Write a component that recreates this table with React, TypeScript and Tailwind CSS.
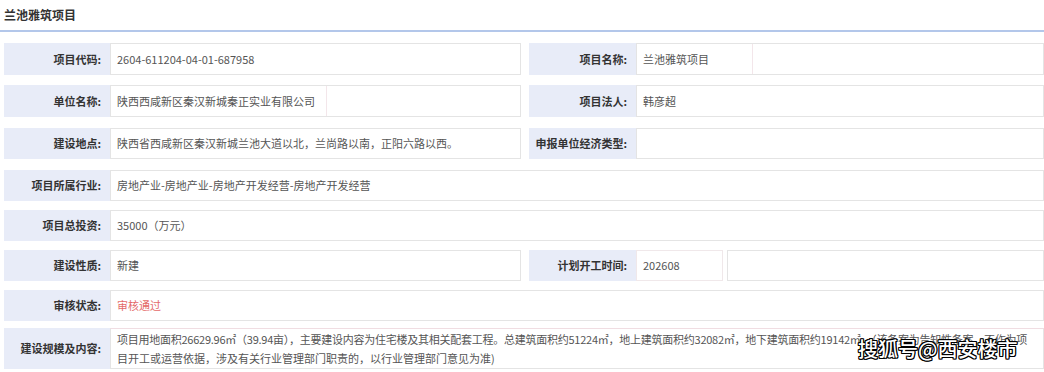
import React from "react";

const FONT = "font-['Noto_Sans_CJK_SC','Noto_Sans',sans-serif]";

function Label({ children, w = "w-[106px]" }: { children: React.ReactNode; w?: string }) {
  return (
    <div
      className={`${w} shrink-0 bg-[#e8ecf8] flex items-center justify-end pr-[9px] text-[11px] font-bold text-[#333] whitespace-nowrap`}
    >
      {children}
    </div>
  );
}

function Value({ children, className = "" }: { children?: React.ReactNode; className?: string }) {
  return (
    <div
      className={`flex-1 min-w-0 bg-white border border-[#e4e4e4] flex items-center pl-[6px] text-[11px] text-[#555] whitespace-nowrap ${className}`}
    >
      {children}
    </div>
  );
}

export default function App() {
  return (
    <div className={`w-[1044px] h-[372px] bg-white relative overflow-hidden ${FONT}`}>
      <div className="h-[30px] flex items-center pl-[4px] text-[12px] font-bold text-[#333]">
        兰池雅筑项目
      </div>
      <div className="h-[2px] bg-[#b3c7ea]" />

      <div className="pl-[4px] flex flex-col">
        {/* row 1 */}
        <div className="mt-[11px] h-[32px] flex">
          <div className="w-[517px] flex">
            <Label>项目代码:</Label>
            <Value>2604-611204-04-01-687958</Value>
          </div>
          <div className="w-[8px]" />
          <div className="flex-1 flex">
            <Label w="w-[107px]">项目名称:</Label>
            <Value>
              <span className="w-[110px] border-r border-[#f3e6ea] h-full flex items-center">兰池雅筑项目</span>
            </Value>
          </div>
        </div>

        {/* row 2 */}
        <div className="mt-[10px] h-[32px] flex">
          <div className="w-[517px] flex">
            <Label>单位名称:</Label>
            <Value>
              <span className="w-[210px] border-r border-[#f3e6ea] h-full flex items-center">陕西西咸新区秦汉新城秦正实业有限公司</span>
            </Value>
          </div>
          <div className="w-[8px]" />
          <div className="flex-1 flex">
            <Label w="w-[107px]">项目法人:</Label>
            <Value>韩彦超</Value>
          </div>
        </div>

        {/* row 3 */}
        <div className="mt-[11px] h-[31px] flex">
          <div className="w-[517px] flex">
            <Label>建设地点:</Label>
            <Value>陕西省西咸新区秦汉新城兰池大道以北，兰尚路以南，正阳六路以西。</Value>
          </div>
          <div className="w-[8px]" />
          <div className="flex-1 flex">
            <Label w="w-[107px]">申报单位经济类型:</Label>
            <Value />
          </div>
        </div>

        {/* row 4 */}
        <div className="mt-[11px] h-[31px] flex">
          <Label>项目所属行业:</Label>
          <Value>房地产业-房地产业-房地产开发经营-房地产开发经营</Value>
        </div>

        {/* row 5 */}
        <div className="mt-[9px] h-[31px] flex">
          <Label>项目总投资:</Label>
          <Value>35000（万元）</Value>
        </div>

        {/* row 6 */}
        <div className="mt-[9px] h-[31px] flex">
          <div className="w-[517px] flex">
            <Label>建设性质:</Label>
            <Value>新建</Value>
          </div>
          <div className="w-[8px]" />
          <div className="flex-1 flex">
            <Label w="w-[107px]">计划开工时间:</Label>
            <div className="w-[87px] bg-white border border-[#f0e8ea] flex items-center pl-[6px] text-[11px] text-[#555]">
              202608
            </div>
            <div className="w-[4px]" />
            <Value />
          </div>
        </div>

        {/* row 7 */}
        <div className="mt-[9px] h-[31px] flex">
          <Label>审核状态:</Label>
          <Value className="text-[#e46a6a]">审核通过</Value>
        </div>

        {/* row 8 */}
        <div className="mt-[7px] h-[41px] flex">
          <Label>建设规模及内容:</Label>
          <div className="flex-1 min-w-0 bg-white border border-[#e4e4e4] border-t-[#f0dde2] flex flex-col justify-center pl-[6px] text-[11px] text-[#555] leading-[19px] overflow-hidden">
            <div className="whitespace-nowrap tracking-[-0.25px]">
              项目用地面积26629.96㎡（39.94亩），主要建设内容为住宅楼及其相关配套工程。总建筑面积约51224㎡，地上建筑面积约32082㎡，地下建筑面积约19142㎡。（该备案为告知性备案，不作为项
            </div>
            <div className="whitespace-nowrap">目开工或运营依据，涉及有关行业管理部门职责的，以行业管理部门意见为准)</div>
          </div>
        </div>
      </div>

      <div className="absolute left-[858px] top-[336px] text-[20px] leading-[26px] font-medium text-white [text-shadow:1px_1px_0_#000,-1px_-1px_0_#000,1px_-1px_0_#000,-1px_1px_0_#000,0_1px_0_#000,1px_0_0_#000,0_-1px_0_#000,-1px_0_0_#000]">
        搜狐号@西安楼市
      </div>
    </div>
  );
}
